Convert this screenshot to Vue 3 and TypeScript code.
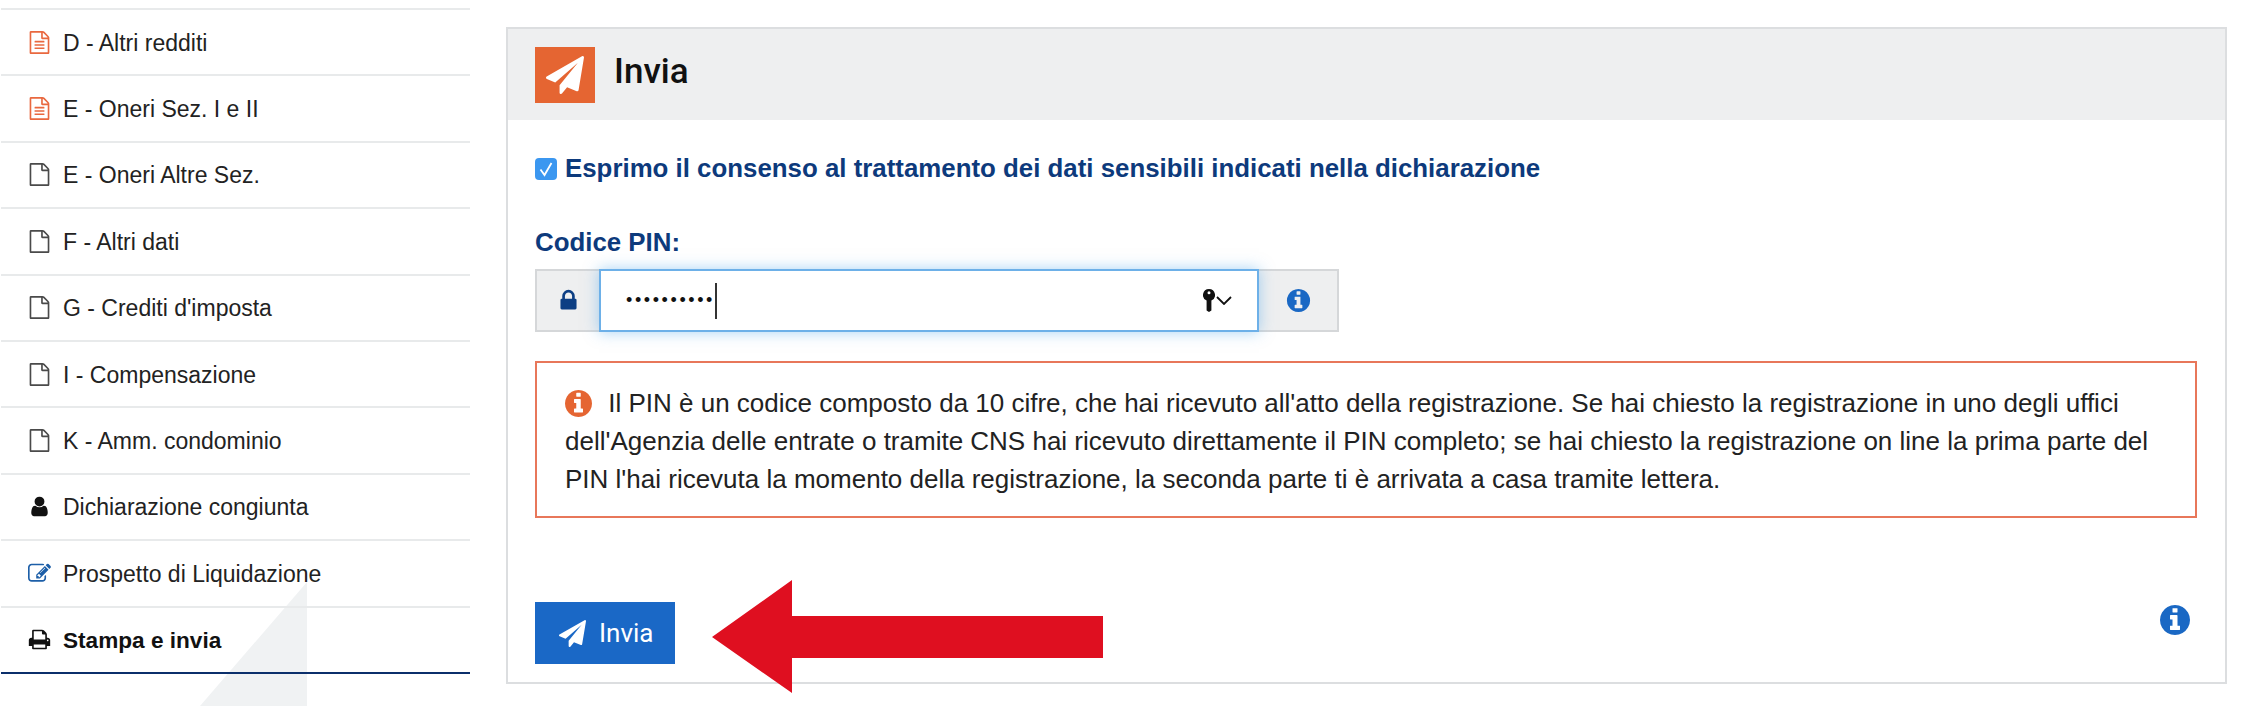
<template>
  <div class="page">
    <svg class="watermark" viewBox="0 0 107 124" aria-hidden="true"><path d="M107 0V124H0Z" /></svg>

    <nav class="sidebar">
      <a
        v-for="item in menu"
        :key="item.label"
        :class="['menu-item', { active: item.active }]"
      >
        <span class="menu-icon">
          <svg viewBox="0 0 1792 1792" :style="{ color: item.color }"><path :d="item.icon" /></svg>
        </span>
        <span class="menu-label">{{ item.label }}</span>
      </a>
    </nav>

    <main class="panel">
      <header class="panel-head">
        <span class="head-icon">
          <svg viewBox="0 0 1792 1792"><path :d="icons.plane" /></svg>
        </span>
        <h1>Invia</h1>
      </header>

      <div class="panel-body">
        <label class="consent">
          <span class="check">
            <svg viewBox="0 0 22 22"><path d="M5.500 11.500l4 5.500 7-12" /></svg>
          </span>
          <span class="consent-text">Esprimo il consenso al trattamento dei dati sensibili indicati nella dichiarazione</span>
        </label>

        <div class="pin-label">Codice PIN:</div>
        <div class="input-group">
          <span class="addon addon-left">
            <svg viewBox="0 0 1792 1792"><path :d="icons.lock" /></svg>
          </span>
          <div class="pin-input">
            <span class="dots">••••••••••</span><span class="caret"></span>
            <span class="keychain">
              <svg class="key" viewBox="0 0 12 23">
                <path d="M6 0a6 6 0 0 1 2.4 11.5V21.500L6 23 3.600 21.500V11.500A6 6 0 0 1 6 0Zm0 2.200a1.500 1.500 0 1 0 0 3 1.500 1.500 0 0 0 0-3Z" />
              </svg>
              <svg class="chevron" viewBox="0 0 16 9"><path d="M1 1l7 7 7-7" /></svg>
            </span>
          </div>
          <span class="addon addon-right">
            <svg viewBox="0 0 1792 1792"><path :d="icons.info" /></svg>
          </span>
        </div>

        <div class="notice">
          <svg class="notice-icon" viewBox="128 128 1536 1536"><path :d="icons.info" /></svg>
          Il PIN è un codice composto da 10 cifre, che hai ricevuto all'atto della registrazione. Se hai chiesto la registrazione in uno degli uffici
          dell'Agenzia delle entrate o tramite CNS hai ricevuto direttamente il PIN completo; se hai chiesto la registrazione on line la prima parte del
          PIN l'hai ricevuta la momento della registrazione, la seconda parte ti è arrivata a casa tramite lettera.
        </div>

        <div class="actions">
          <button class="send-btn">
            <svg viewBox="0 0 1792 1792"><path :d="icons.plane" /></svg>
            Invia
          </button>
          <svg class="help" viewBox="128 128 1536 1536"><path :d="icons.info" /></svg>
        </div>
      </div>
    </main>

    <!-- freccia rossa sopra lo screenshot -->
    <svg class="arrow" viewBox="0 0 391 113" aria-hidden="true">
      <path d="M0 57 80 0V36H391V78H80V113Z" />
    </svg>
  </div>
</template>

<script setup lang="ts">
interface MenuItem {
  label: string
  icon: string
  color: string
  active?: boolean
}

const fileShape =
  'M1596 380q28 28 48 76t20 88v1152q0 40-28 68t-68 28h-1344q-40 0-68-28t-28-68v-1600q0-40 28-68t68-28h896q40 0 88 20t76 48zm-444-244v376h376q-10-29-22-41l-313-313q-12-12-41-22zm384 1528v-1024h-416q-40 0-68-28t-28-68v-416h-768v1536h1280z'

const icons = {
  file: fileShape,
  fileText:
    fileShape +
    'm-1024-864q0-14 9-23t23-9h704q14 0 23 9t9 23v64q0 14-9 23t-23 9h-704q-14 0-23-9t-9-23v-64zm736 224q14 0 23 9t9 23v64q0 14-9 23t-23 9h-704q-14 0-23-9t-9-23v-64q0-14 9-23t23-9h704zm0 256q14 0 23 9t9 23v64q0 14-9 23t-23 9h-704q-14 0-23-9t-9-23v-64q0-14 9-23t23-9h704z',
  user: 'M1536 1399q0 109-62.5 187t-150.5 78h-854q-88 0-150.5-78t-62.5-187q0-85 8.5-160.5t31.5-152 58.5-131 94-89 134.5-34.5q131 128 313 128t313-128q76 0 134.5 34.5t94 89 58.5 131 31.5 152 8.5 160.5zm-256-887q0 159-112.5 271.5t-271.5 112.5-271.5-112.5-112.5-271.5 112.5-271.5 271.5-112.5 271.5 112.5 112.5 271.5z',
  edit: 'M888 1184l116-116-152-152-116 116v56h96v96h56zm440-720q-16-16-33 1l-350 350q-17 17-1 33t33-1l350-350q17-17 1-33zm80 594v190q0 119-84.5 203.5t-203.5 84.5h-832q-119 0-203.5-84.5t-84.5-203.5v-832q0-119 84.5-203.5t203.5-84.5h832q63 0 117 25 15 7 18 23 3 17-9 29l-49 49q-14 14-32 8-23-6-45-6h-832q-66 0-113 47t-47 113v832q0 66 47 113t113 47h832q66 0 113-47t47-113v-126q0-13 9-22l64-64q15-15 35-7t20 29zm-96-738l288 288-672 672h-288v-288zm444 132l-92 92-288-288 92-92q28-28 68-28t68 28l152 152q28 28 28 68t-28 68z',
  print: 'M448 1536h896v-256h-896v256zm0-640h896v-384h-160q-40 0-68-28t-28-68v-160h-640v640zm1152 64q0-26-19-45t-45-19-45 19-19 45 19 45 45 19 45-19 19-45zm128 0v416q0 13-9.5 22.5t-22.500 9.500h-224v160q0 40-28 68t-68 28h-960q-40 0-68-28t-28-68v-160h-224q-13 0-22.500-9.500t-9.500-22.500v-416q0-79 56.500-135.500t135.500-56.500h64v-544q0-40 28-68t68-28h672q40 0 88 20t76 48l152 152q28 28 48 76t20 88v256h64q79 0 135.500 56.500t56.500 135.500z',
  plane: 'M1764 11q33 24 27 64l-256 1536q-5 29-32 45-14 8-31 8-11 0-24-5l-453-185-242 295q-18 23-49 23-13 0-22-4-19-7-30.500-23.500t-11.500-36.500v-349l864-1059-1069 925-395-162q-37-14-40-55-2-40 32-59l1664-960q15-9 32-9 20 0 36 11z',
  lock: 'M640 768h512v-192q0-106-75-181t-181-75-181 75-75 181v192zm832 96v576q0 40-28 68t-68 28h-960q-40 0-68-28t-28-68v-576q0-40 28-68t68-28h32v-192q0-184 132-316t316-132 316 132 132 316v192h32q40 0 68 28t28 68z',
  info: 'M1152 1376v-160q0-14-9-23t-23-9h-96v-512q0-14-9-23t-23-9h-320q-14 0-23 9t-9 23v160q0 14 9 23t23 9h96v320h-96q-14 0-23 9t-9 23v160q0 14 9 23t23 9h448q14 0 23-9t9-23zm-128-896v-160q0-14-9-23t-23-9h-192q-14 0-23 9t-9 23v160q0 14 9 23t23 9h192q14 0 23-9t9-23zm640 416q0 209-103 385.500t-279.500 279.500-385.500 103-385.500-103-279.500-279.500-103-385.500 103-385.500 279.500-279.500 385.500-103 385.500 103 279.500 279.500 103 385.500z'
}

const orange = '#e9683f'
const grey = '#4a4a4a'

const menu: MenuItem[] = [
  { label: 'D - Altri redditi', icon: icons.fileText, color: orange },
  { label: 'E - Oneri Sez. I e II', icon: icons.fileText, color: orange },
  { label: 'E - Oneri Altre Sez.', icon: icons.file, color: grey },
  { label: 'F - Altri dati', icon: icons.file, color: grey },
  { label: "G - Crediti d'imposta", icon: icons.file, color: grey },
  { label: 'I - Compensazione', icon: icons.file, color: grey },
  { label: 'K - Amm. condominio', icon: icons.file, color: grey },
  { label: 'Dichiarazione congiunta', icon: icons.user, color: '#111' },
  { label: 'Prospetto di Liquidazione', icon: icons.edit, color: '#1d5fa8' },
  { label: 'Stampa e invia', icon: icons.print, color: '#111', active: true }
]
</script>

<style>
html,
body {
  margin: 0;
  background: #fff;
  overflow: hidden;
}
</style>

<style scoped>
.page {
  position: relative;
  display: flex;
  align-items: flex-start;
  width: 2250px;
  height: 706px;
  overflow: hidden;
  box-sizing: border-box;
  padding-left: 1px;
  font-family: "Liberation Sans", Arial, sans-serif;
  color: #1c1c1c;
}

svg {
  display: block;
  fill: currentColor;
}

.watermark {
  position: absolute;
  left: 200px;
  top: 582px;
  width: 107px;
  height: 124px;
  fill: #f0f2f3;
}

.sidebar {
  position: relative;
  width: 469px;
  margin-top: 8px;
  border-top: 2px solid #e8eaeb;
}

.menu-item {
  display: flex;
  align-items: center;
  gap: 12px;
  height: 64.400px;
  border-bottom: 2px solid #e8eaeb;
  padding-left: 27px;
  font-size: 23px;
  color: #222;
}

.menu-label {
  padding-top: 2px;
}

.menu-item:last-child {
  border-bottom-color: #0b2f6b;
}

.menu-item.active {
  font-weight: 700;
  font-size: 22.600px;
  color: #111;
}

.menu-icon {
  width: 23px;
  height: 23px;
  flex: none;
}

.menu-icon svg {
  width: 23px;
  height: 23px;
}

.panel {
  position: relative;
  width: 1721px;
  height: 657px;
  margin: 27px 0 0 36px;
  box-sizing: border-box;
  border: 2px solid #dcdee0;
  background: #fff;
}

.panel-head {
  display: flex;
  align-items: center;
  gap: 19px;
  height: 91px;
  padding-left: 27px;
  background: #eeeff0;
}

.head-icon {
  display: flex;
  align-items: center;
  justify-content: center;
  width: 60px;
  height: 56px;
  background: #e56532;
  color: #fff;
}

.head-icon svg {
  width: 38px;
  height: 38px;
}

.panel-head h1 {
  margin: 0 0 6px;
  font-family: Roboto, sans-serif;
  font-size: 35px;
  font-weight: 500;
  color: #111;
}

.panel-body {
  padding: 37px 28px 0 27px;
}

.consent {
  display: flex;
  align-items: center;
  gap: 8px;
  height: 24px;
  font-size: 25.850px;
  font-weight: 700;
  color: #0d3a7c;
}

.consent-text {
  margin-bottom: 2px;
}

.check {
  width: 22px;
  height: 22px;
  flex: none;
  border-radius: 4px;
  background: #3b97f0;
}

.check svg {
  width: 22px;
  height: 22px;
  fill: none;
  stroke: #fff;
  stroke-width: 1.800;
}

.pin-label {
  margin-top: 48px;
  height: 26px;
  line-height: 26px;
  font-size: 25.850px;
  font-weight: 700;
  color: #0d3a7c;
}

.input-group {
  display: flex;
  width: 804px;
  height: 63px;
  margin-top: 14px;
}

.addon {
  display: flex;
  align-items: center;
  justify-content: center;
  box-sizing: border-box;
  height: 63px;
  background: #eeeff0;
  border: 2px solid #d5d7d9;
}

.addon-left {
  width: 64px;
  border-right: 0;
  color: #0d3f84;
}

.addon-left svg {
  width: 25px;
  height: 25px;
}

.addon-right {
  width: 80px;
  border-left: 0;
  color: #1a68c4;
}

.addon-right svg {
  width: 27px;
  height: 27px;
}

.pin-input {
  position: relative;
  z-index: 1;
  display: flex;
  align-items: center;
  box-sizing: border-box;
  width: 660px;
  height: 63px;
  padding: 0 25px 0 25px;
  background: #fff;
  border: 2px solid #6db0e8;
  box-shadow: 0 0 14px rgba(82, 168, 236, 0.5);
}

.dots {
  font-size: 18px;
  letter-spacing: 2.600px;
  line-height: 1;
  margin-bottom: 2px;
  color: #111;
}

.caret {
  width: 2px;
  height: 36px;
  background: #333;
}

.keychain {
  display: flex;
  align-items: center;
  gap: 1px;
  margin-left: auto;
}

.key {
  width: 12px;
  height: 23px;
  fill: #111;
}

.chevron {
  width: 16px;
  height: 9px;
  fill: none;
  stroke: #111;
  stroke-width: 1.800;
}

.notice {
  box-sizing: border-box;
  margin-top: 29px;
  height: 157px;
  padding: 21px 28px 0 28px;
  border: 2px solid #e8775a;
  font-size: 26px;
  line-height: 38px;
  color: #222;
}

.notice-icon {
  display: inline-block;
  width: 27px;
  height: 27px;
  margin-right: 9px;
  vertical-align: -5px;
  color: #e56532;
}

.actions {
  display: flex;
  align-items: flex-start;
  justify-content: space-between;
  margin-top: 84px;
}

.send-btn {
  display: flex;
  align-items: center;
  gap: 13px;
  width: 140px;
  height: 62px;
  padding: 0 0 0 24px;
  border: 0;
  background: #1a68c6;
  color: #fff;
  font-family: Roboto, sans-serif;
  font-size: 26px;
}

.send-btn svg {
  width: 27px;
  height: 27px;
}

.help {
  width: 30px;
  height: 30px;
  margin: 3px 7px 0 0;
  color: #1a68c4;
}

.arrow {
  position: absolute;
  left: 712px;
  top: 580px;
  width: 391px;
  height: 113px;
  fill: #df0f20;
}
</style>
